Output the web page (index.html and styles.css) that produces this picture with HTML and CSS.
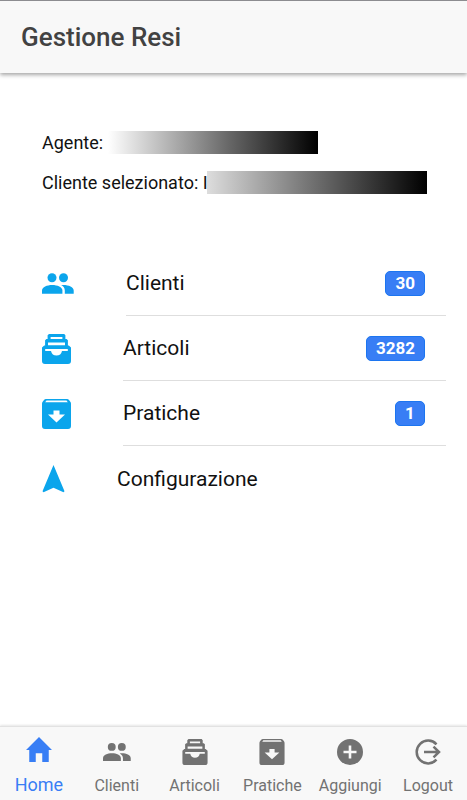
FILE: index.html
```
<!DOCTYPE html>
<html lang="it">
<head>
<meta charset="utf-8">
<meta name="viewport" content="width=device-width, initial-scale=1">
<title>Gestione Resi</title>
<link rel="stylesheet" href="styles.css">
</head>
<body>
<svg class="defs" aria-hidden="true">
  <symbol id="people" viewBox="0 0 32 21">
    <circle cx="10" cy="4.7" r="4.5"/>
    <circle cx="21.5" cy="4.7" r="4.5"/>
    <path d="M0 20.7v-3.2c0-3.3 5-5.5 10.2-5.5s10.2 2.2 10.2 5.500v3.200z"/>
    <path d="M19.2 12.1c.7-.1 1.500-.1 2.300-.1 5.200 0 10.200 2.200 10.200 5.500v3.200h-8.900v-3.200c0-2.300-1.400-4.200-3.600-5.400z"/>
  </symbol>
  <symbol id="box" viewBox="0 0 29 30">
    <path fill-rule="evenodd" d="M7 0h15.200l1.200 1.300v3.700h1.200l1.300 1.200v5.200h.9l2.200 2.200v13.400q0 3-3 3H3q-3 0-3-3V13.600l2.200-2.200h.9V6.200L4.400 5h1.200V1.300zM8.600 3v2h11.800V3zM6 8.600v2.700h17V8.600zM3.200 15v2H9q1 4.600 5.500 4.600T20 17h5.800v-2z"/>
  </symbol>
  <symbol id="archive" viewBox="0 0 29 30">
    <path fill-rule="evenodd" d="M4 0h21q1.300 0 2.200 1.200L28.500 3q.5.800.5 1.800V27q0 3-3 3H3q-3 0-3-3V4.800Q0 3.800.5 3l1.300-1.800Q2.700 0 4 0zM4.500 1.500L3.200 3.200h22.600l-1.300-1.700zM11.500 11.500v4H6l8.500 8L23 15.500h-5.500v-4z"/>
  </symbol>
  <symbol id="navigate" viewBox="0 0 22 28">
    <path d="M11 0l11 26.300-1 1-10-4.500-10 4.500-1-1z"/>
  </symbol>
  <symbol id="home" viewBox="0 0 24 23">
    <path d="M3 23V12H0L12 0l12 12h-3v11h-6v-8H9v8z"/>
  </symbol>
  <symbol id="add" viewBox="0 0 26 26">
    <path fill-rule="evenodd" d="M13 0a13 13 0 1 1 0 26a13 13 0 1 1 0-26zM11.700 6.500v5.200H6.500v2.600h5.200v5.200h2.600v-5.200h5.200v-2.600h-5.200V6.500z"/>
  </symbol>
  <symbol id="logout" viewBox="0 0 26 26">
    <g fill="none" stroke="currentColor" stroke-width="2.500">
      <path d="M21.500 5.300A11.400 11.400 0 1 0 21.500 20.700"/>
      <path d="M9 13h15M18.500 7.700L24 13l-5.500 5.300"/>
    </g>
  </symbol>
</svg>
<header class="toolbar"><h1>Gestione Resi</h1></header>
<main>
  <section class="info">
    <p>Agente: <span class="redacted agent"></span></p>
    <p>Cliente selezionato: I<span class="redacted client"></span></p>
  </section>
  <nav class="list" aria-label="Menu">
    <a class="item" href="#clienti"><svg class="people"><use href="#people"/></svg><span class="inner">Clienti<span class="badge">30</span></span></a>
    <a class="item" href="#articoli"><svg class="box"><use href="#box"/></svg><span class="inner">Articoli<span class="badge">3282</span></span></a>
    <a class="item" href="#pratiche"><svg class="box"><use href="#archive"/></svg><span class="inner">Pratiche<span class="badge">1</span></span></a>
    <a class="item" href="#configurazione"><svg class="navigate"><use href="#navigate"/></svg><span class="inner">Configurazione</span></a>
  </nav>
</main>
<nav class="tabs" aria-label="Schede">
  <a class="tab active" href="#home" aria-current="page"><svg><use href="#home"/></svg><span>Home</span></a>
  <a class="tab wide" href="#clienti"><svg><use href="#people"/></svg><span>Clienti</span></a>
  <a class="tab" href="#articoli"><svg><use href="#box"/></svg><span>Articoli</span></a>
  <a class="tab" href="#pratiche"><svg><use href="#archive"/></svg><span>Pratiche</span></a>
  <a class="tab" href="#aggiungi"><svg><use href="#add"/></svg><span>Aggiungi</span></a>
  <a class="tab" href="#logout"><svg><use href="#logout"/></svg><span>Logout</span></a>
</nav>
</body>
</html>
```
FILE: styles.css
```
* { box-sizing: border-box; }

body {
  margin: 0;
  min-height: 100vh;
  display: flex;
  flex-direction: column;
  background: #fff;
  color: #111;
  font-family: Roboto, "Liberation Sans", sans-serif;
}

a { color: inherit; text-decoration: none; }
svg { display: block; fill: currentColor; flex: none; }
.defs { position: absolute; width: 0; height: 0; }

.toolbar {
  padding: 20px 21px;
  background: #f8f8f8;
  border-top: 1px solid #8c8c90;
  box-shadow: 0 2px 4px rgba(0, 0, 0, .35);
}
.toolbar h1 {
  margin: 0;
  font-size: 26px;
  line-height: 32px;
  font-weight: 500;
  color: #424242;
}

main { flex: 1; }

.info {
  padding: 49px 40px 0 42px;
  font-size: 18px;
}
.info p {
  display: flex;
  align-items: center;
  margin: 0;
  height: 40px;
  white-space: pre;
}
.redacted { height: 23px; }
.agent {
  width: 210px;
  background: linear-gradient(90deg, #fff, #666 58%, #000);
}
.client {
  width: 220px;
  margin-left: -1px;
  background: linear-gradient(90deg, #ddd, #777 45%, #000);
}

.list { margin-top: 49px; }
.item {
  display: flex;
  align-items: center;
  gap: 52px;
  padding: 0 21px 0 42px;
  font-size: 21px;
}
.item > svg { color: #0ba5ec; }
.people { width: 32px; height: 21px; }
.box { width: 29px; height: 30px; }
.navigate { width: 23px; height: 28px; }
.inner {
  flex: 1;
  display: flex;
  align-items: center;
  justify-content: space-between;
  height: 65px;
  padding-right: 21px;
  border-bottom: 1px solid #dedede;
}
.item:last-child .inner { border-bottom: 0; }
.badge {
  min-width: 30px;
  height: 25px;
  padding: 0 9px;
  border: 1px solid #1c75f0;
  border-radius: 5px;
  background: #387ef5;
  color: #fff;
  font-size: 17px;
  line-height: 22px;
  font-weight: 700;
  text-align: center;
}

.tabs {
  display: flex;
  height: 74px;
  background: #f8f8f8;
  border-top: 1px solid #e2e2e2;
  box-shadow: 0 -1px 2px rgba(0, 0, 0, .1);
}
.tab {
  flex: 1 1 0;
  min-width: 0;
  display: flex;
  flex-direction: column;
  align-items: center;
  gap: 10px;
  padding-top: 12px;
  color: #727272;
  font-size: 16px;
  line-height: 22px;
}
.tab svg { width: 26px; height: 26px; }
.tab.wide svg { width: 28px; }
.tab.active { color: #387ef5; font-size: 18px; gap: 12px; padding-top: 10px; }
.tab.active svg { height: 25px; }
```
